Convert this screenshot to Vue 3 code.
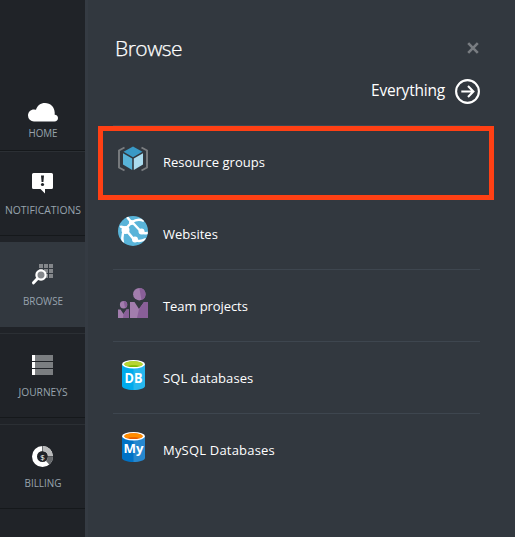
<script setup>
const nav = [
  { id: 'home', label: 'HOME', width: 29 },
  { id: 'notifications', label: 'NOTIFICATIONS', width: 76 },
  { id: 'browse', label: 'BROWSE', active: true, width: 40 },
  { id: 'journeys', label: 'JOURNEYS', width: 49 },
  { id: 'billing', label: 'BILLING', width: 37 },
]
const rows = [
  { id: 'groups', label: 'Resource groups' },
  { id: 'web', label: 'Websites' },
  { id: 'team', label: 'Team projects' },
  { id: 'sql', label: 'SQL databases' },
  { id: 'mysql', label: 'MySQL Databases' },
]
</script>

<template>
  <div class="shell">
    <nav class="sidebar">
      <a v-for="n in nav" :key="n.id" class="nav-item" :class="[n.id, { active: n.active }]">
        <svg v-if="n.id === 'home'" class="nav-icon" viewBox="0 0 30 30">
          <path fill="#fff" d="M6 23.500a6 6 0 0 1-6-6c0-3.400 2.600-6 6-6l2 .2C9.200 7.700 12.600 5 17 5c5.500 0 9.500 4 9.700 9.500v2.300c2 .2 3.300 1.500 3.300 3.300 0 2-1.500 3.400-3.500 3.400z" />
        </svg>
        <svg v-else-if="n.id === 'notifications'" class="nav-icon" viewBox="0 0 30 30">
          <path fill="#fff" d="M5.500 6h18q1.500 0 1.500 1.500v13q0 1.500-1.500 1.500H17v4.500L12.500 22h-7Q4 22 4 20.500v-13Q4 6 5.500 6z" />
          <path fill="#202328" d="M13 8.500h3l-.6 6.500h-1.800z" /><circle cx="14.500" cy="17.500" r="1.600" fill="#202328" />
        </svg>
        <svg v-else-if="n.id === 'browse'" class="nav-icon" viewBox="0 0 30 30">
          <path fill="#83868a" d="M11 6h4v4h-4zM16 6h4v4h-4zM21 6h4v4h-4zM11 11h4v4h-4zM16 11h4v4h-4zM21 11h4v4h-4zM16 16h4v4h-4zM21 16h4v4h-4z" />
          <path stroke="#fff" stroke-width="3" stroke-linecap="round" d="M10 20l-4.500 4.800" />
          <circle cx="13" cy="17" r="4.600" fill="#83868a" stroke="#fff" stroke-width="2.200" />
        </svg>
        <svg v-else-if="n.id === 'journeys'" class="nav-icon" viewBox="0 0 30 30" shape-rendering="crispEdges">
          <path fill="#7b7e81" d="M7 6h18v6H7zM7 13h18v6H7zM7 20h18v6H7z" />
          <path fill="#fff" d="M4 6h3v6H4zM4 13h3v6H4zM4 20h3v6H4z" />
        </svg>
        <svg v-else class="nav-icon" viewBox="0 0 30 30">
          <circle cx="14.500" cy="16.500" r="8" fill="none" stroke="#fff" stroke-width="5" />
          <path fill="none" stroke="#b9babb" stroke-width="5" d="M14.500 8.500a8 8 0 0 1 8 8" />
          <path fill="none" stroke="#66696c" stroke-width="5" d="M22.500 16.500a8 8 0 0 1-2.600 5.900" />
          <path stroke="#202328" stroke-width=".6" d="M14.500 6v5M20 16.500h5M18 20.500l3.500 3.800" />
          <text x="14.500" y="19.500" text-anchor="middle" class="dollar">$</text>
        </svg>
        <svg class="nav-label" viewBox="0 0 86 16"><text x="43" y="12" text-anchor="middle" :textLength="n.width" lengthAdjust="spacingAndGlyphs">{{ n.label }}</text></svg>
      </a>
    </nav>
    <main class="panel">
      <header class="head">
        <h1>Browse</h1>
        <svg class="close" viewBox="0 0 12 12"><path d="M1.200 1.200l9.600 9.600M10.800 1.200l-9.600 9.600" /></svg>
      </header>
      <div class="everything">
        <span>Everything</span>
        <svg viewBox="0 0 25 25"><circle cx="12.500" cy="12.500" r="11.400" /><path d="M6.300 12.500H18M13 7l5.400 5.500L13 18" /></svg>
      </div>
      <ul class="list">
        <li v-for="r in rows" :key="r.id" :class="[r.id, { highlighted: r.id === 'groups' }]">
          <svg v-if="r.id === 'groups'" class="icon" viewBox="0 0 30 30">
            <path fill="none" stroke="#7a7d80" stroke-width="1.900" d="M6.500 3.500L1 6.500v17l5.500 3M23.500 3.500L29 6.500v17l-5.500 3" />
            <path fill="#3999c6" d="M15 2.500l9.500 5.200L15 13.200 5.500 7.700z" />
            <path fill="#59b4d9" d="M5 9.300l9.200 5.300V26L5 20.500z" />
            <path fill="#abdcef" d="M25 9.300l-9.200 5.300V26l9.200-5.500z" />
          </svg>
          <svg v-else-if="r.id === 'web'" class="icon" viewBox="0 0 30 30">
            <defs><clipPath id="globe"><circle cx="15" cy="15" r="15" /></clipPath></defs>
            <g clip-path="url(#globe)">
              <path fill="#59b4d9" d="M0 0h30v30H0z" />
              <path fill="none" stroke="#fff" stroke-width="2.500" d="M9 1l5 6M14 6Q20 2 26 5M14 6L7 13.500Q3 19 5 27M8 13Q4 10 2 11M8 14l8 9.500q5 3 12-.5M14 6l9 9.500q3 3 7 1" />
              <circle cx="13.500" cy="6.500" r="2.500" fill="#fff" /><circle cx="7.500" cy="14" r="4" fill="#fff" />
              <circle cx="23.500" cy="15.500" r="3" fill="#fff" /><circle cx="17" cy="23.500" r="3" fill="#fff" />
            </g>
          </svg>
          <svg v-else-if="r.id === 'team'" class="icon" viewBox="0 0 30 30">
            <path fill="#a27dad" d="M12 14h4.500L21 21l5-7h4v16H12zM0 21.500h2.500L5.500 26l3-4.500H11V30H0z" />
            <circle cx="21.300" cy="6.200" r="6.200" fill="#a27dad" /><circle cx="5.600" cy="16.700" r="3.700" fill="#a27dad" />
            <path fill="#895f98" d="M26 14h4v16H19l2-9zM8.500 21.500H11V30H5l.5-4zM21.300 0a6.200 6.200 0 0 1 2.200 12zM5.600 13a3.700 3.700 0 0 1 1.500 7z" />
          </svg>
          <svg v-else class="icon" viewBox="0 0 30 30">
            <path :fill="r.id === 'sql' ? '#00abec' : '#0072c6'" d="M4 4v22c0 2.300 5 4 11.500 4S27 28.300 27 26V4z" />
            <path fill="#fff" fill-opacity=".15" d="M15.500 4H27v22c0 2.300-5 4-11.500 4z" />
            <ellipse cx="15.500" cy="4.200" rx="11.500" ry="4.200" fill="#fff" />
            <ellipse cx="15.500" cy="4.200" rx="9.200" ry="2.900" :fill="r.id === 'sql' ? '#7fba00' : '#e55b00'" />
            <path :fill="r.id === 'sql' ? '#b8d432' : '#ff8c00'" d="M6.300 4.200c0-1.600 4.100-2.900 9.200-2.900s9.200 1.300 9.200 2.900c0 .8-1 1.500-2.600 2-3.200-1.300-10-1.300-13.200 0-1.600-.5-2.600-1.200-2.600-2z" />
            <text v-if="r.id === 'sql'" class="badge" x="15.500" y="22.500" text-anchor="middle" textLength="18" lengthAdjust="spacingAndGlyphs">DB</text>
            <text v-else class="badge my" x="15.500" y="21" text-anchor="middle" textLength="20" lengthAdjust="spacingAndGlyphs">My</text>
          </svg>
          <span>{{ r.label }}</span>
        </li>
      </ul>
    </main>
  </div>
</template>

<style>
body { margin: 0; background: #32383f; }
</style>

<style scoped>
.shell { display: flex; width: 515px; height: 537px; overflow: hidden; background: #32383f; font-family: "Open Sans", "Noto Sans", sans-serif; }
.sidebar { width: 85px; flex: none; background: #202328; display: flex; flex-direction: column; gap: 6px; padding-top: 60px; box-sizing: border-box; }
.nav-item { height: 85px; flex: none; box-sizing: border-box; border-top: 1px solid #2b2f34; border-bottom: 1px solid #15181b; display: flex; flex-direction: column; align-items: center; padding-top: 15px; }
.nav-item.home { border-top-color: transparent; height: 91px; margin-bottom: -6px; padding-top: 37px; }
.nav-item.active { background: #32383f; border-color: #32383f; }
.nav-icon { width: 30px; height: 30px; flex: none; }
.nav-label { width: 86px; height: 16px; margin-top: 5px; flex: none; overflow: visible; }
.home .nav-label { margin-top: -3px; }
.nav-label text { font-size: 10.500px; fill: #98a3ae; }
.dollar { font-size: 8px; fill: #fff; }
.panel { flex: 1; box-sizing: border-box; border-left: 3px solid #353b43; padding: 0 35px 0 25px; }
.head { display: flex; justify-content: space-between; padding: 32px 1px 0 2px; height: 32px; }
h1 { margin: 0; font-weight: 300; font-size: 21px; line-height: 32px; color: #fff; letter-spacing: -.5px; -webkit-text-stroke: .25px #fff; }
.close { width: 12px; height: 12px; margin-top: 10px; }
.close path { stroke: #797d82; stroke-width: 2.600; }
.everything { display: flex; justify-content: flex-end; align-items: center; gap: 10px; height: 25px; margin-top: 15px; color: #fff; font-size: 15.500px; letter-spacing: -.2px; }
.everything span { line-height: 23px; padding-bottom: 2px; }
.everything svg { width: 25px; height: 25px; fill: none; stroke: #fff; stroke-width: 2.100; }
.list { list-style: none; margin: 21px 0 0; padding: 0; }
.list li { position: relative; box-sizing: border-box; height: 72px; border-top: 1px solid #3e464f; display: flex; gap: 15px; padding: 18px 0 0 5px; color: #fff; font-size: 13px; line-height: 36px; }
.list .team { letter-spacing: -.08px; }
.list .sql { letter-spacing: .08px; }
.list .mysql { letter-spacing: .2px; }
.highlighted::after { content: ""; position: absolute; box-sizing: border-box; left: -15px; top: 0; width: 396px; height: 74px; border: 5px solid #ff4014; z-index: 1; }
.icon { width: 30px; height: 30px; flex: none; }
.badge { font-weight: 700; font-size: 13.500px; fill: #fff; letter-spacing: 0; }
.my { font-size: 11.500px; }
</style>
